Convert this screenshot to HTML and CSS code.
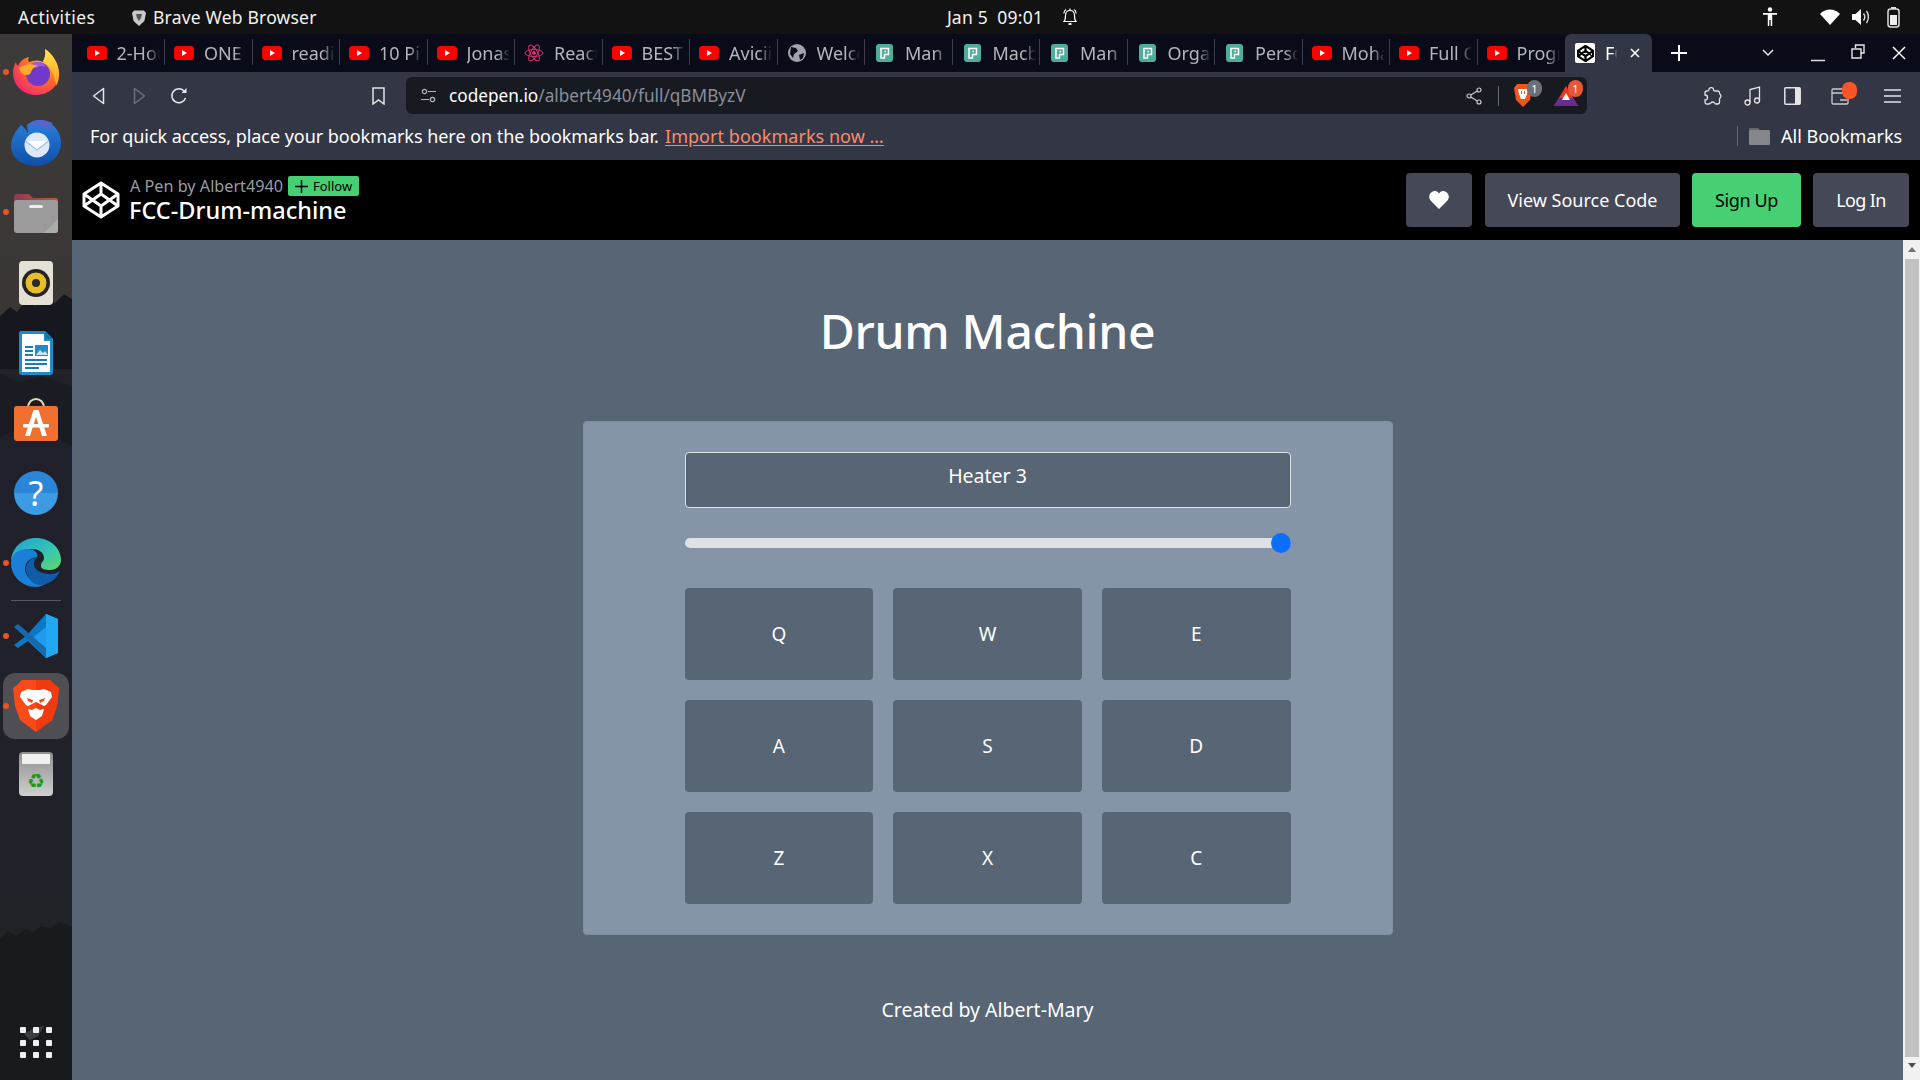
FILE: index.html
```html
<!DOCTYPE html>
<html lang="en">
<head>
<meta charset="utf-8">
<title>FCC-Drum-machine</title>
<link rel="stylesheet" href="styles.css">
</head>
<body>
<svg class="defs" width="0" height="0" aria-hidden="true">
  <defs>
    <symbol id="yt" viewBox="0 0 20 14"><rect width="20" height="14" rx="3.5" fill="#f00"/><path d="M8 4l5 3-5 3z" fill="#fff"/></symbol>
    <symbol id="pen" viewBox="0 0 17 18"><rect width="17" height="18" rx="3" fill="#4fae9b"/><path d="M5 4.500h7.500v6H8.500V14H5z" fill="none" stroke="#fff" stroke-width="1.500"/><path d="M8.500 7.500h1.500" stroke="#fff" stroke-width="1.300"/></symbol>
    <radialGradient id="ffg" cx=".75" cy=".2" r="1"><stop offset="0" stop-color="#ffc12e"/><stop offset=".5" stop-color="#ff6b2c"/><stop offset="1" stop-color="#ee1a78"/></radialGradient>
    <linearGradient id="ffy" x1="0" y1="0" x2="0" y2="1"><stop offset="0" stop-color="#ffe84d"/><stop offset="1" stop-color="#ff9a1f"/></linearGradient>
    <linearGradient id="tbg" x1="0" y1="0" x2="0" y2="1"><stop offset="0" stop-color="#2a7fe0"/><stop offset="1" stop-color="#0f4fa6"/></linearGradient>
    <linearGradient id="fold" x1="0" y1="0" x2="1" y2="0"><stop offset="0" stop-color="#8a3a55"/><stop offset="1" stop-color="#c9572b"/></linearGradient>
    <linearGradient id="edg" x1="0" y1="0" x2="1" y2="1"><stop offset="0" stop-color="#1f9fd8"/><stop offset=".6" stop-color="#37c6b0"/><stop offset="1" stop-color="#64d964"/></linearGradient>
  </defs>
</svg>

<header class="topbar">
  <div class="top-left">
    <span class="top-activities">Activities</span>
    <span class="top-app">
      <svg width="14" height="17" viewBox="0 0 14 17"><path d="M2 1.500h10L14 4l-1.600 8L7 17 1.600 12 0 4z" fill="#c9c9c9"/><path d="M4 5h6l-1 4-2 3-2-3z" fill="#555"/></svg>
      Brave Web Browser
    </span>
  </div>
  <div class="top-center">
    <span>Jan 5&nbsp; 09:01</span>
    <svg width="14" height="18" viewBox="0 0 14 18" fill="none" stroke="#fff" stroke-width="1.200"><path d="M1 13.500c1.500-1.500 1.500-3 1.500-6C2.500 4 4.500 2.500 7 2.500S11.500 4 11.500 7.500c0 3 0 4.500 1.500 6z"/><path d="M7 .5v2M.8 5.500C1 3.500 2 2 3 1.500M13.200 5.500C13 3.500 12 2 11 1.500"/><path d="M5.500 16h3" stroke-width="1.800"/></svg>
  </div>
  <div class="top-right">
    <svg class="t-acc" width="16" height="20" viewBox="0 0 16 20" fill="#fff"><circle cx="8" cy="2.500" r="2.200"/><path d="M1 6h14v1.800h-4.800V19H8.700v-6H7.300v6H5.800V7.800H1z"/></svg>
    <svg class="t-wifi" width="20" height="16" viewBox="0 0 20 16" fill="#fff"><path d="M0 5C5-1 15-1 20 5L10 16z"/></svg>
    <svg class="t-vol" width="19" height="18" viewBox="0 0 19 18" fill="#fff"><path d="M0 6h3.500L9 1v16l-5.500-5H0z"/><path d="M11.500 5.500c1.500 2 1.500 5 0 7M14.500 3c2.500 3.500 2.500 8.500 0 12" fill="none" stroke="#ddd" stroke-width="1.400"/></svg>
    <svg class="t-bat" width="13" height="21" viewBox="0 0 13 21"><rect x="1" y="2" width="11" height="18" rx="2.500" fill="none" stroke="#ddd" stroke-width="1.500"/><rect x="4" y="0" width="5" height="2" fill="#ddd"/><rect x="3" y="8" width="7" height="10" fill="#eee"/></svg>
  </div>
</header>

<div class="desktop">
  <nav class="dock">
    <svg class="wall" viewBox="0 0 72 1046" preserveAspectRatio="none" aria-hidden="true">
      <path d="M0 250l8 8 7-6 6 8 8-14 6 6 9-10 8 8 8-12 12 8v60H0z" fill="#3a3634"/>
      <path d="M0 282l10-9 7 5 10-13 8 7 10-7 10 4 9-9 8 5v70H0z" fill="#17181f"/>
      <path d="M0 340l18 8 24-6 30 10v60l-40-20-32 10z" fill="#181921" opacity=".7"/>
      <path d="M0 905l8-8 8 5 10-7 7 3 8-6 10 2 8-6 13 5v153H0z" fill="#181b1d"/>
      <path d="M24 1000l10-6 10-2-6 10-8 4z" fill="#3b3f44"/>
    </svg>
    <div class="dock-item dot">
      <svg width="46" height="46" viewBox="0 0 46 46"><path d="M32 0c8 5 14 15 14 25 0 12-10 21-23 21S0 36 0 24c0-4 1-8 3-11 0 2 1 3 2 4 2-5 6-8 11-9-1 2-1 4 0 5 5-2 10-2 14 0 2-3 3-9 2-13z" fill="url(#ffg)"/><path d="M32 0c7 5 14 14 14 25 0 5-1 9-3 12-1-11-6-20-13-25 2-3 3-8 2-12z" fill="url(#ffy)"/><circle cx="25" cy="25" r="12" fill="#7239c9"/><path d="M20 14c5-2 11 0 13 4-4-2-8-1-10 1z" fill="#a15be0"/><path d="M6 19c5-4 13-5 19-2-4 1-6 3-7 6 0 2-2 3-5 3-3 0-6-3-7-7z" fill="#ffa92e"/></svg>
    </div>
    <div class="dock-item">
      <svg width="50" height="48" viewBox="0 0 50 48"><path d="M10 7C4 14 0 20 0 28c0 11 10 20 24 20s26-9 26-23C50 13 41 2 28 2c-5 0-9 2-12 5l1 8c-2-3-4-6-7-8z" fill="url(#tbg)"/><path d="M18 7c5-5 12-6 18-4l6 2-4 2 5 5-7-2c-5-3-12-3-18-3z" fill="#5a62cf"/><circle cx="26" cy="27" r="12.500" fill="#dbe9f8"/><path d="M14.500 23l11.500 9 11.500-9" fill="#fff" stroke="#9fc1e8" stroke-width="1.200"/></svg>
    </div>
    <div class="dock-item dot">
      <svg width="44" height="42" viewBox="0 0 44 42"><path d="M0 6a3 3 0 0 1 3-3h12l4 4h22a3 3 0 0 1 3 3v10H0z" fill="url(#fold)"/><rect y="9" width="44" height="33" rx="3" fill="#9b9b9b"/><path d="M30 42l14-14v11a3 3 0 0 1-3 3z" fill="#acacac"/><rect x="15" y="14" width="14" height="3" rx="1.500" fill="#eee"/></svg>
    </div>
    <div class="dock-item">
      <svg width="34" height="44" viewBox="0 0 34 44"><rect width="34" height="44" rx="4" fill="#e4e0d5"/><circle cx="17" cy="22" r="14" fill="#232323"/><circle cx="17" cy="22" r="10.500" fill="#e9bd2a"/><circle cx="17" cy="22" r="4" fill="#2a2a2a"/></svg>
    </div>
    <div class="dock-item">
      <svg width="34" height="44" viewBox="0 0 34 44"><path d="M2 0h24l8 8v33a3 3 0 0 1-3 3H3a3 3 0 0 1-3-3V2a2 2 0 0 1 2-2z" fill="#1f8bc9"/><path d="M3 3h22v7h6v31H3z" fill="#fff"/><path d="M26 0l8 8h-8z" fill="#1878ad"/><path d="M6 16h8M6 20h8M6 24h8M6 29h22M6 33h22M6 37h14" stroke="#1a7cb5" stroke-width="1.800"/><rect x="16" y="14" width="13" height="11" fill="#1f8bc9"/><path d="M17 24l4-5 3 3 2-2 3 4z" fill="#cfe6f5"/></svg>
    </div>
    <div class="dock-item item-store">
      <svg width="44" height="46" viewBox="0 0 44 46"><path d="M14 11c0-12 16-12 16 0" fill="none" stroke="#e7d6b8" stroke-width="2"/><rect y="9" width="44" height="35" rx="3" fill="#f2702f"/><path d="M19.500 13h5L33 39h-5l-6-19-6 19h-5z" fill="#fff"/><rect x="9" y="27" width="26" height="3.500" rx="1" fill="#fff"/></svg>
    </div>
    <div class="dock-item">
      <div class="help">?</div>
    </div>
    <div class="dock-item dot">
      <svg width="50" height="50" viewBox="0 0 50 50"><path d="M0 25C0 10 11 0 25 0c14 0 25 10 25 22 0 6-5 10-11 10-5 0-9-1-9-4 0-5 3-4 3-8 0-6-6-9-12-9C10 11 0 17 0 25z" fill="url(#edg)"/><path d="M0 25c0-9 8-14 16-14 7 0 12 4 10 8-8 1-12 6-12 12 0 7 6 12 14 14 2 .5 4 1 6 1-3 2-6 3-9 3C11 49 0 38 0 25z" fill="#1a7fd6"/><path d="M15 31c0-6 5-11 11-12-2 2-3 4-3 7 0 7 9 10 16 10 4 0 7-1 10-3-4 9-13 15-22 14-7-2-12-9-12-16z" fill="#0f5ca8"/></svg>
    </div>
    <div class="dock-sep"></div>
    <div class="dock-item dot item-code">
      <svg width="44" height="44" viewBox="0 0 44 44"><path d="M32 0l12 5v34l-12 5-20-19z" fill="#1f9cf0"/><path d="M32 0v13L17 25 4 34 0 31l12-9L32 0z" fill="#0b78c4"/><path d="M0 13l4-3 28 24v10L12 24z" fill="#1769aa"/><path d="M32 0l12 5v34l-12 5z" fill="#22a7f2"/></svg>
    </div>
    <div class="dock-item dot item-active">
      <svg width="46" height="52" viewBox="0 0 46 52"><path d="M9 0h28l5 5 4 3-2 18-5 14-16 12L7 40 2 26 0 8l4-3z" fill="#fb4a1a"/><path d="M23 52V0h14l5 5 4 3-2 18-5 14z" fill="#f03a10"/><path d="M8 12l7-3 4 1h8l4-1 7 3 1 5-6 8-2 1-4-2-4-2-4 2-4 2-2-1-6-8zM15 29l4 1 4-2 4 2 4-1-2 7-6 4-6-4z" fill="#fff"/><path d="M14 18l6 2-1 3-4-2zM32 18l-6 2 1 3 4-2z" fill="#fb4a1a"/></svg>
    </div>
    <div class="dock-item item-trash">
      <div class="bin"><span class="bin-lid"></span><span class="bin-sym">♻</span></div>
    </div>
    <div class="apps">
      <i></i><i></i><i></i><i></i><i></i><i></i><i></i><i></i><i></i>
    </div>
  </nav>

  <main class="browser">
    <div class="tabs">
      <div class="tab"><svg class="fav" width="20" height="14"><use href="#yt"/></svg><span class="tab-t">2-Hour</span></div>
      <div class="tab"><svg class="fav" width="20" height="14"><use href="#yt"/></svg><span class="tab-t">ONE</span></div>
      <div class="tab"><svg class="fav" width="20" height="14"><use href="#yt"/></svg><span class="tab-t">reading</span></div>
      <div class="tab"><svg class="fav" width="20" height="14"><use href="#yt"/></svg><span class="tab-t">10 Pi</span></div>
      <div class="tab"><svg class="fav" width="20" height="14"><use href="#yt"/></svg><span class="tab-t">Jonas</span></div>
      <div class="tab"><svg class="fav" width="20" height="20" viewBox="0 0 20 20" fill="none" stroke="#d62f6b" stroke-width="1"><ellipse cx="10" cy="10" rx="9" ry="3.500"/><ellipse cx="10" cy="10" rx="9" ry="3.500" transform="rotate(60 10 10)"/><ellipse cx="10" cy="10" rx="9" ry="3.500" transform="rotate(120 10 10)"/><circle cx="10" cy="10" r="1.500" fill="#d62f6b"/></svg><span class="tab-t">React</span></div>
      <div class="tab"><svg class="fav" width="20" height="14"><use href="#yt"/></svg><span class="tab-t">BEST</span></div>
      <div class="tab"><svg class="fav" width="20" height="14"><use href="#yt"/></svg><span class="tab-t">Avicii</span></div>
      <div class="tab"><svg class="fav" width="20" height="20" viewBox="0 0 20 20"><circle cx="10" cy="10" r="9" fill="#a0a3ab"/><path d="M4 4l5 1 2 3-4 3-1 4-3-4zM12 12l5-2-1 5-3 2z" fill="#0a0b18"/></svg><span class="tab-t">Welcome</span></div>
      <div class="tab tab-pen"><svg class="fav" width="17" height="18"><use href="#pen"/></svg><span class="tab-t">Man</span></div>
      <div class="tab tab-pen"><svg class="fav" width="17" height="18"><use href="#pen"/></svg><span class="tab-t">Macbook</span></div>
      <div class="tab tab-pen"><svg class="fav" width="17" height="18"><use href="#pen"/></svg><span class="tab-t">Man</span></div>
      <div class="tab tab-pen"><svg class="fav" width="17" height="18"><use href="#pen"/></svg><span class="tab-t">Organ</span></div>
      <div class="tab tab-pen"><svg class="fav" width="17" height="18"><use href="#pen"/></svg><span class="tab-t">Person</span></div>
      <div class="tab"><svg class="fav" width="20" height="14"><use href="#yt"/></svg><span class="tab-t">Mohamed</span></div>
      <div class="tab"><svg class="fav" width="20" height="14"><use href="#yt"/></svg><span class="tab-t">Full Course</span></div>
      <div class="tab tab-last"><svg class="fav" width="20" height="14"><use href="#yt"/></svg><span class="tab-t">Program</span></div>
      <div class="tab-active">
        <span class="fav-white"><svg width="17" height="17" viewBox="0 0 38 38" fill="none" stroke="#000" stroke-width="5" stroke-linejoin="round"><path d="M19 2l17 11v12L19 36 2 25V13zM19 2v11M19 25v11M2 13l17 12 17-12M2 25l17-12 17 12"/></svg></span>
        <span class="active-t">FCC</span>
        <svg class="tab-x" width="12" height="12" viewBox="0 0 12 12" stroke="#fff" stroke-width="1.600"><path d="M2 2l8 8M10 2l-8 8"/></svg>
      </div>
      <svg class="new-tab" width="16" height="16" viewBox="0 0 16 16" stroke="#fff" stroke-width="2"><path d="M8 0v16M0 8h16"/></svg>
      <div class="win">
        <svg class="chev" width="12" height="8" viewBox="0 0 12 8" fill="none" stroke="#e8e8e8" stroke-width="1.500"><path d="M1 1l5 5 5-5"/></svg>
        <svg class="mini" width="14" height="14" viewBox="0 0 14 14" stroke="#ddd" stroke-width="1.500"><path d="M0 12.500h14"/></svg>
        <svg class="rest" width="14" height="15" viewBox="0 0 14 15" fill="none" stroke="#e8e8e8" stroke-width="1.400"><path d="M4.500 4V1h8.500v8h-3M1 5h9v9H1z"/></svg>
        <svg class="shut" width="14" height="14" viewBox="0 0 14 14" stroke="#fff" stroke-width="1.500"><path d="M1 1l12 12M13 1L1 13"/></svg>
      </div>
    </div>

    <div class="toolbar">
      <svg class="ic-back" width="13" height="18" viewBox="0 0 13 18" fill="none" stroke="#e4e4e4" stroke-width="1.500" stroke-linejoin="round"><path d="M11.500 1.500v15L1.500 9z"/></svg>
      <svg class="ic-fwd" width="13" height="18" viewBox="0 0 13 18" fill="none" stroke="#6e717c" stroke-width="1.500" stroke-linejoin="round"><path d="M1.500 1.500v15L11.500 9z"/></svg>
      <svg class="ic-rel" width="18" height="18" viewBox="0 0 18 18" fill="none" stroke="#e8e8e8" stroke-width="1.500"><path d="M15.500 11a7 7 0 1 1-1.500-7"/><path d="M11.500 6h5V1z" fill="#e8e8e8" stroke="none"/></svg>
      <svg class="ic-mark" width="13" height="18" viewBox="0 0 13 18" fill="none" stroke="#e4e4e4" stroke-width="1.500"><path d="M1 1h11v16l-5.500-4L1 17z"/></svg>
      <div class="urlbar">
        <svg class="ic-site" width="15" height="15" viewBox="0 0 15 15" fill="none" stroke="#b5b7bd" stroke-width="1.200"><circle cx="3.500" cy="3.500" r="2.200"/><circle cx="11.500" cy="11.500" r="2.200"/><path d="M7 3.500h8M0 11.500h8"/></svg>
        <span class="url"><b>codepen.io</b>/albert4940/full/qBMByzV</span>
        <svg class="ic-share" width="16" height="18" viewBox="0 0 16 18" fill="none" stroke="#c9cad0" stroke-width="1.200"><circle cx="13" cy="3" r="2"/><circle cx="3" cy="9" r="2"/><circle cx="13" cy="15" r="2"/><path d="M11.300 4L4.700 8M4.700 10l6.600 4"/></svg>
        <span class="url-sep"></span>
        <span class="shield-wrap">
          <svg width="18" height="25" viewBox="0 0 18 25"><path d="M3 1h12l3 4-2 12-7 7-7-7L0 5z" fill="#f0551c"/><path d="M4 6h10l-1 5-2 5H7l-2-5z" fill="#fff"/><path d="M7 8h1v3H7zM10 8h1v3h-1z" fill="#f0551c"/></svg>
          <b class="badge gray">1</b>
        </span>
        <span class="bat-wrap">
          <svg width="24" height="20" viewBox="0 0 24 20"><path d="M12 0l12 20H0z" fill="#e8391f"/><path d="M0 20l5-8h14l5 8z" fill="#662d91"/><path d="M12 7l4 7H8z" fill="#fff"/></svg>
          <b class="badge red">1</b>
        </span>
      </div>
      <svg class="ic-ext" width="18" height="20" viewBox="0 0 18 20" fill="none" stroke="#e4e4e4" stroke-width="1.300"><path d="M5 3.500C5 1 9.500 1 9.500 3.500c0 1 .5 1.500 1.500 1.500h3c1 0 1.500 1 1.500 2 0 1.500 1.500 1.500 1.500 3s-1.500 2-1.500 3v3c0 1.500-1 2-2 2h-2c-1 0-.5-2-2.500-2S6 18 5 18H3c-1.500 0-2-1-2-2v-2c1.500 0 2.500-1 2.500-2.500S2.500 9 1 9V7c0-1.500 1-2 2-2 1 0 2 0 2-1.500z"/></svg>
      <svg class="ic-music" width="17" height="20" viewBox="0 0 17 20" fill="none" stroke="#e4e4e4" stroke-width="1.300"><circle cx="3.500" cy="16.500" r="2.500"/><circle cx="13" cy="14.500" r="2.500"/><path d="M6 16.500V3.500L15.500 1v13.500"/></svg>
      <svg class="ic-side" width="17" height="18" viewBox="0 0 17 18"><rect x=".8" y=".8" width="15.400" height="16.400" rx="1" fill="none" stroke="#e4e4e4" stroke-width="1.500"/><rect x="11" y="1" width="5" height="16" fill="#e4e4e4"/></svg>
      <span class="wallet">
        <svg width="18" height="17" viewBox="0 0 18 17" fill="none" stroke="#c9cad0" stroke-width="1.300"><rect x="1" y="1" width="16" height="15" rx="1"/><path d="M1 5h16M9 12h7"/></svg>
        <i class="wallet-dot"></i>
      </span>
      <svg class="ic-menu" width="17" height="14" viewBox="0 0 17 14" stroke="#e4e4e4" stroke-width="1.300"><path d="M0 1h17M0 7h17M0 13h17"/></svg>
    </div>

    <div class="bookmarks">
      <span class="bm-text">For quick access, place your bookmarks here on the bookmarks bar.</span>
      <a class="bm-link" href="#">Import bookmarks now …</a>
      <span class="bm-sep"></span>
      <svg class="bm-fold" width="21" height="20" viewBox="0 0 21 20"><path d="M0 2h9l2 2h10v4H0z" fill="#65676e"/><rect y="4" width="21" height="15" rx="1.500" fill="#85878d"/></svg>
      <span class="bm-all">All Bookmarks</span>
    </div>

    <div class="pen-head">
      <svg class="cp-logo" width="38" height="38" viewBox="0 0 38 38" fill="none" stroke="#fff" stroke-width="3" stroke-linejoin="round"><path d="M19 2l17 11v12L19 36 2 25V13zM19 2v11M19 25v11M2 13l17 12 17-12M2 25l17-12 17 12"/></svg>
      <div class="pen-info">
        <div class="pen-by"><span>A Pen by Albert4940</span><span class="follow"><svg width="13" height="13" viewBox="0 0 13 13" stroke="#000" stroke-width="1.500"><path d="M6.500 0v13M0 6.500h13"/></svg>Follow</span></div>
        <div class="pen-title">FCC-Drum-machine</div>
      </div>
      <div class="pen-actions">
        <button class="btn btn-heart" type="button"><svg width="20" height="18" viewBox="0 0 20 18" fill="#fff"><path d="M10 18L1.500 9.500C-2 5 2 0 6 0c2 0 3 1 4 2.500C11 1 12 0 14 0c4 0 8 5 4.500 9.500z"/></svg></button>
        <button class="btn btn-src" type="button">View Source Code</button>
        <button class="btn btn-up" type="button">Sign Up</button>
        <button class="btn btn-log" type="button">Log In</button>
      </div>
    </div>

    <div class="page-row">
      <section class="page">
        <h1 class="title">Drum Machine</h1>
        <div class="panel">
          <div class="display">Heater 3</div>
          <input class="volume" type="range" min="0" max="100" value="100" aria-label="Volume">
          <div class="pads">
            <button class="pad" type="button">Q</button>
            <button class="pad" type="button">W</button>
            <button class="pad" type="button">E</button>
            <button class="pad" type="button">A</button>
            <button class="pad" type="button">S</button>
            <button class="pad" type="button">D</button>
            <button class="pad" type="button">Z</button>
            <button class="pad" type="button">X</button>
            <button class="pad" type="button">C</button>
          </div>
        </div>
        <p class="credit">Created by Albert-Mary</p>
      </section>
      <div class="scrollbar">
        <i class="arrow up"></i>
        <div class="thumb"></div>
        <i class="arrow down"></i>
      </div>
    </div>
  </main>
</div>
</body>
</html>
```
FILE: styles.css
```css
* { box-sizing: border-box; }
html, body { margin: 0; height: 100%; }
body {
  width: 1920px;
  height: 1080px;
  overflow: hidden;
  display: flex;
  flex-direction: column;
  background: #000;
  color: #fff;
  font-family: "Noto Sans", "Open Sans", sans-serif;
}
.defs { position: absolute; }

/* top bar */
.topbar {
  height: 34px;
  flex: none;
  background: #121212;
  display: grid;
  grid-template-columns: 1fr auto 1fr;
  align-items: center;
  font-size: 17.500px;
  letter-spacing: .2px;
  color: #f2f2f2;
}
.top-left { display: flex; align-items: center; padding-left: 18px; }
.top-activities { width: 114px; letter-spacing: .45px; }
.top-app { display: flex; align-items: center; gap: 7px; }
.top-center { display: flex; align-items: center; gap: 20px; padding-left: 104px; }
.top-right { display: flex; align-items: center; justify-content: flex-end; padding-right: 20px; }
.t-wifi { margin-left: 42px; }
.t-vol { margin-left: 12px; }
.t-bat { margin-left: 16px; }

/* desktop */
.desktop { flex: 1; display: flex; min-height: 0; }
.dock {
  width: 72px;
  flex: none;
  position: relative;
  display: flex;
  flex-direction: column;
  align-items: center;
  padding-top: 3px;
  background: linear-gradient(#3c3a3a 0, #3b3737 210px, #3a3636 280px, #1f2029 345px, #20212a 640px, #212228 900px, #1a1c1f 1046px);
}
.wall { position: absolute; inset: 0; width: 100%; height: 100%; }
.dock-item {
  position: relative;
  width: 72px;
  height: 70.200px;
  flex: none;
  display: flex;
  align-items: center;
  justify-content: center;
}
.dock-item.dot::before {
  content: "";
  position: absolute;
  left: 3px;
  top: 32px;
  width: 6px;
  height: 6px;
  border-radius: 50%;
  background: #e95420;
}
.item-store svg { margin-top: -6px; }
.help {
  width: 44px;
  height: 44px;
  border-radius: 50%;
  background: linear-gradient(#2b86d9 50%, #3d9be3 50%);
  color: #fff;
  font-size: 34px;
  line-height: 44px;
  text-align: center;
}
.dock-sep { position: relative; width: 50px; height: 1px; background: #5a5a5e; margin: 1px 0 0; flex: none; }
.item-code { margin-top: 0; }
.item-active { margin: 2px 3px 0; width: 66px; height: 66px; border-radius: 12px; background: #4f4e53; }
.item-active.dot::before { left: 0; top: 30px; }
.item-trash { margin-top: 0; }
.bin {
  width: 34px;
  height: 44px;
  border-radius: 4px;
  background: linear-gradient(#8f8f8f, #cfcfcf);
  position: relative;
  display: flex;
  justify-content: center;
  align-items: flex-end;
}
.bin-lid { position: absolute; top: 2px; left: 3px; right: 3px; height: 10px; background: #f0f0f0; border-radius: 1px; }
.bin-sym { color: #1b9a1b; font-size: 20px; line-height: 30px; font-family: "DejaVu Sans", sans-serif; }
.apps {
  position: relative;
  margin-top: auto;
  margin-bottom: 22px;
  width: 32px;
  display: grid;
  grid-template-columns: repeat(3, 6px);
  gap: 6.500px;
  justify-content: space-between;
}
.apps i { width: 6px; height: 6px; background: #f0f0f0; border-radius: 1px; }

/* browser */
.browser { flex: 1; min-width: 0; display: flex; flex-direction: column; }
.tabs {
  height: 38px;
  flex: none;
  background: #0a0b18;
  display: flex;
  align-items: stretch;
  padding-left: 5.500px;
}
.tab {
  width: 87.500px;
  flex: none;
  display: flex;
  align-items: center;
  padding-left: 9px;
  position: relative;
  font-size: 18px;
  color: #b4b5ba;
  overflow: hidden;
}
.tab::after {
  content: "";
  position: absolute;
  right: 0;
  height: 26px;
  top: 5px;
  width: 1px;
  background: #3c3e4a;
}
.tab-last::after { display: none; }
.fav { flex: none; }
.tab-pen { padding-left: 11px; }
.tab-t {
  margin-left: 10px;
  width: 43px;
  flex: none;
  white-space: nowrap;
  overflow: hidden;
  -webkit-mask-image: linear-gradient(90deg, #000 70%, transparent 100%);
  mask-image: linear-gradient(90deg, #000 70%, transparent 100%);
}
.tab-pen .tab-t { margin-left: 12px; }
.tab-active {
  width: 87px;
  flex: none;
  background: #333644;
  border-radius: 6px 6px 0 0;
  display: flex;
  align-items: center;
  padding-left: 10px;
  font-size: 18px;
}
.fav-white { width: 20px; height: 20px; background: #fff; border-radius: 2px; display: flex; align-items: center; justify-content: center; flex: none; }
.active-t { margin-left: 10px; width: 12px; overflow: hidden; -webkit-mask-image: linear-gradient(90deg, #000 70%, transparent); mask-image: linear-gradient(90deg, #000 70%, transparent); }
.tab-x { margin-left: 12px; }
.new-tab { margin: 11px 0 0 19px; flex: none; }
.win { flex: 1; display: flex; align-items: center; position: relative; }
.chev { margin-left: 74.500px; }
.mini { margin-left: 37px; margin-top: 4px; }
.rest { margin-left: 26px; margin-top: -4px; }
.shut { margin-left: 27px; }

/* toolbar */
.toolbar {
  height: 42px;
  flex: none;
  background: #333644;
  display: flex;
  align-items: center;
  position: relative;
}
.toolbar > svg { flex: none; margin-top: 5px; }
.ic-back { margin-left: 20px; }
.ic-fwd { margin-left: 28px; }
.ic-rel { margin-left: 24px; }
.ic-mark { margin-left: 184px; }
.urlbar {
  align-self: flex-end;
  margin-left: 21px;
  width: 1181px;
  height: 37px;
  background: #181a22;
  border-radius: 6px;
  display: flex;
  align-items: center;
  padding-left: 15px;
  flex: none;
}
.url { margin-left: 13px; font-size: 17.200px; color: #8b8e97; white-space: nowrap; width: 1018px; }
.url b { font-weight: 400; color: #fff; }
.ic-share { margin-left: -1px; }
.url-sep { width: 1px; height: 20px; background: #6b6d76; margin-left: 16px; }
.shield-wrap { position: relative; margin-left: 15px; display: flex; }
.bat-wrap { position: relative; margin-left: 22px; display: flex; }
.badge {
  position: absolute;
  width: 15px;
  height: 17px;
  border-radius: 8px;
  font-size: 11px;
  line-height: 17px;
  text-align: center;
  font-weight: 400;
  color: #fff;
}
.badge.gray { background: #6d6f78; left: 13px; top: -3px; }
.badge.red { background: #e9553a; left: 14px; top: -6px; }
.ic-ext { margin-left: 117px; }
.ic-music { margin-left: 22px; }
.ic-side { margin-left: 23px; }
.wallet { position: relative; margin: 6px 0 0 30px; display: flex; flex: none; }
.wallet-dot { position: absolute; left: 11px; top: -6px; width: 15px; height: 17px; border-radius: 7px; background: #fa5527; }
.ic-menu { margin-left: 35px; }

/* bookmarks */
.bookmarks {
  height: 46px;
  flex: none;
  background: #333644;
  display: flex;
  align-items: center;
  padding: 0 0 2px 18px;
  font-size: 18px;
  white-space: nowrap;
}
.bm-text { width: 575px; letter-spacing: -.04px; }
.bm-link { color: #fb8a6d; text-decoration: underline; text-underline-offset: 2px; width: 230px; letter-spacing: .04px; }
.bm-sep { width: 1px; height: 20px; background: #62646e; margin-left: 842px; }
.bm-fold { margin-left: 11px; flex: none; }
.bm-all { margin-left: 11px; }

/* codepen head */
.pen-head {
  height: 80px;
  flex: none;
  background: #000;
  display: flex;
  align-items: center;
  padding: 0 11px 0 10px;
}
.cp-logo { flex: none; }
.pen-info { margin-left: 10px; display: flex; flex-direction: column; }
.pen-by { display: flex; align-items: center; gap: 5px; font-size: 16.200px; line-height: 20px; color: #9a9ca3; padding-top: 1px; }
.follow {
  display: flex;
  align-items: center;
  gap: 5px;
  height: 20px;
  padding: 0 7px;
  background: #47cf73;
  border-radius: 2px;
  color: #000;
  font-size: 13px;
}
.pen-title { font-size: 23.500px; font-weight: 500; line-height: 29px; color: #fff; margin-left: -1px; }
.pen-actions { margin-left: auto; display: flex; gap: 12px; }
.btn {
  height: 54px;
  border: 0;
  border-radius: 4px;
  background: #444857;
  color: #fff;
  font: 400 18px "Noto Sans", sans-serif;
  padding: 0;
  display: flex;
  align-items: center;
  justify-content: center;
}
.btn-heart { width: 66px; margin-right: 1px; }
.btn-src { width: 195px; }
.btn-up { width: 109px; background: #47cf73; color: #000; letter-spacing: -.4px; }
.btn-log { width: 96px; letter-spacing: -.6px; }

/* page */
.page-row { flex: 1; min-height: 0; display: flex; }
.page {
  flex: 1;
  min-width: 0;
  background: #586575;
  display: flex;
  flex-direction: column;
  align-items: center;
  padding-top: 62px;
}
.title { margin: 0; font-size: 48px; line-height: 58px; font-weight: 500; color: #fff; letter-spacing: -.3px; }
.panel {
  margin-top: 61px;
  width: 810px;
  padding: 30px 101px;
  background: #8595a7;
  border: 1px solid #7f8fa1;
  border-radius: 4px;
}
.display {
  height: 56px;
  border: 1px solid #dee2e6;
  border-radius: 4px;
  background: #586575;
  text-align: center;
  font-size: 19.500px;
  line-height: 46px;
}
.volume {
  -webkit-appearance: none;
  appearance: none;
  display: block;
  width: 100%;
  height: 20px;
  margin: 25px 0 35px;
  background: transparent;
}
.volume::-webkit-slider-runnable-track { height: 10px; border-radius: 5px; background: #dee2e6; }
.volume::-webkit-slider-thumb {
  -webkit-appearance: none;
  width: 20px;
  height: 20px;
  margin-top: -5px;
  border-radius: 50%;
  background: #0d6efd;
}
.pads { display: grid; grid-template-columns: repeat(3, 1fr); grid-auto-rows: 92px; gap: 20px; }
.pad {
  border: 0;
  border-radius: 4px;
  background: #586575;
  color: #fff;
  font: 400 19px "Noto Sans", sans-serif;
}
.credit { margin: 61px 0 0; font-size: 19.500px; line-height: 27px; color: #fff; }
.scrollbar {
  width: 17px;
  flex: none;
  background: #f1f1f1;
  display: flex;
  flex-direction: column;
  align-items: center;
}
.arrow { width: 0; height: 0; border-left: 4.500px solid transparent; border-right: 4.500px solid transparent; flex: none; }
.arrow.up { border-bottom: 5px solid #707070; margin-top: 7px; }
.arrow.down { border-top: 5px solid #505050; margin-top: 6px; }
.thumb { width: 14px; height: 798px; margin-top: 7px; background: #c1c1c1; }
```
